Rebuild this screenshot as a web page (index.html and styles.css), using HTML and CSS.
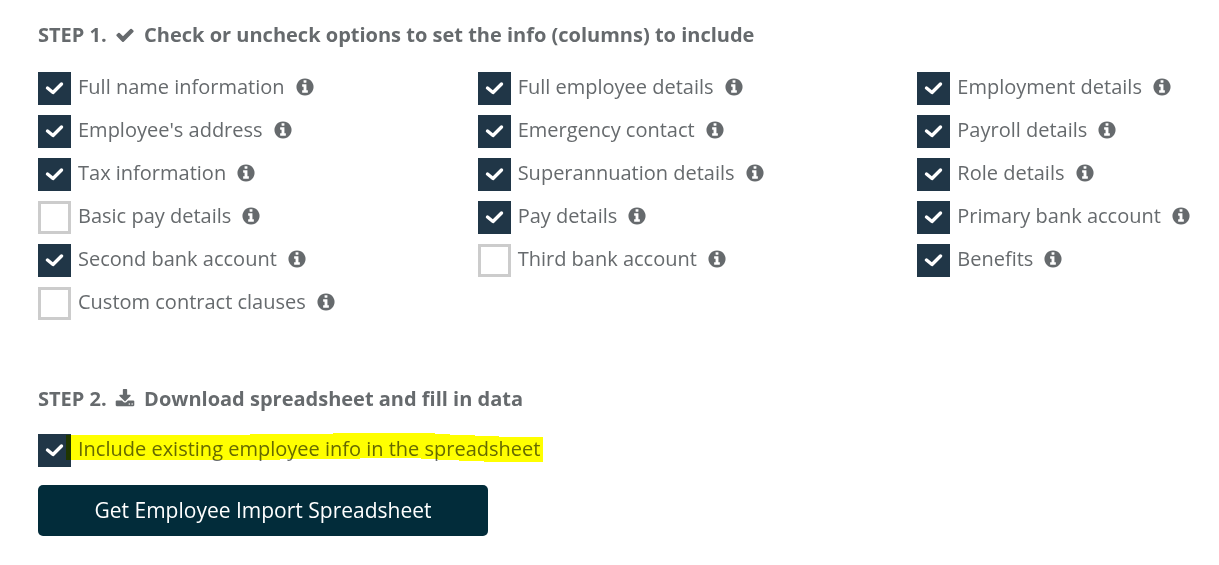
FILE: index.html
```html
<!DOCTYPE html>
<html lang="en">
<head>
  <meta charset="UTF-8" />
  <meta name="viewport" content="width=device-width, initial-scale=1.0" />
  <title>Employee import</title>
  <link rel="stylesheet" href="styles.css">
</head>
<body>
  <svg class="sprite" viewBox="0 0 1792 1792" aria-hidden="true">
    <symbol id="check" viewBox="0 0 1792 1792"><path d="M1671 566q0 40-28 68l-724 724-136 136q-28 28-68 28t-68-28l-136-136-362-362q-28-28-28-68t28-68l136-136q28-28 68-28t68 28l294 295 656-657q28-28 68-28t68 28l136 136q28 28 28 68z"/></symbol>
    <symbol id="info" viewBox="0 0 1792 1792"><path d="M1152 1376v-160q0-14-9-23t-23-9h-96v-512q0-14-9-23t-23-9h-320q-14 0-23 9t-9 23v160q0 14 9 23t23 9h96v320h-96q-14 0-23 9t-9 23v160q0 14 9 23t23 9h448q14 0 23-9t9-23zm-128-896v-160q0-14-9-23t-23-9h-192q-14 0-23 9t-9 23v160q0 14 9 23t23 9h192q14 0 23-9t9-23zm640 416q0 209-103 385.5t-279.5 279.5-385.5 103-385.5-103-279.5-279.5-103-385.5 103-385.5 279.5-279.5 385.5-103 385.5 103 279.5 279.5 103 385.5z"/></symbol>
    <symbol id="download" viewBox="0 0 1792 1792"><path d="M1344 1344q0-26-19-45t-45-19-45 19-19 45 19 45 45 19 45-19 19-45zm256 0q0-26-19-45t-45-19-45 19-19 45 19 45 45 19 45-19 19-45zm128-224v320q0 40-28 68t-68 28h-1472q-40 0-68-28t-28-68v-320q0-40 28-68t68-28h465l135 136q58 56 136 56t136-56l136-136h464q40 0 68 28t28 68zm-325-569q17 41-14 70l-448 448q-18 19-45 19t-45-19l-448-448q-31-29-14-70 17-39 59-39h256v-448q0-26 19-45t45-19h256q26 0 45 19t19 45v448h256q42 0 59 39z"/></symbol>
    <symbol id="tick" viewBox="0 0 33 33"><path d="M9.500 16L15 20.500L23.500 12" fill="none" stroke="#fff" stroke-width="3.400" stroke-linecap="round" stroke-linejoin="round"/></symbol>
  </svg>

  <main>
    <section>
      <h2>STEP 1. <svg class="icon"><use href="#check"/></svg> Check or uncheck options to set the info (columns) to include</h2>
      <div class="options">
        <label class="option"><span class="box"><input type="checkbox" checked><svg><use href="#tick"/></svg></span><span class="text">Full name information</span><svg class="icon"><use href="#info"/></svg></label>
        <label class="option"><span class="box"><input type="checkbox" checked><svg><use href="#tick"/></svg></span><span class="text">Full employee details</span><svg class="icon"><use href="#info"/></svg></label>
        <label class="option"><span class="box"><input type="checkbox" checked><svg><use href="#tick"/></svg></span><span class="text">Employment details</span><svg class="icon"><use href="#info"/></svg></label>
        <label class="option"><span class="box"><input type="checkbox" checked><svg><use href="#tick"/></svg></span><span class="text">Employee's address</span><svg class="icon"><use href="#info"/></svg></label>
        <label class="option"><span class="box"><input type="checkbox" checked><svg><use href="#tick"/></svg></span><span class="text">Emergency contact</span><svg class="icon"><use href="#info"/></svg></label>
        <label class="option"><span class="box"><input type="checkbox" checked><svg><use href="#tick"/></svg></span><span class="text">Payroll details</span><svg class="icon"><use href="#info"/></svg></label>
        <label class="option"><span class="box"><input type="checkbox" checked><svg><use href="#tick"/></svg></span><span class="text">Tax information</span><svg class="icon"><use href="#info"/></svg></label>
        <label class="option"><span class="box"><input type="checkbox" checked><svg><use href="#tick"/></svg></span><span class="text">Superannuation details</span><svg class="icon"><use href="#info"/></svg></label>
        <label class="option"><span class="box"><input type="checkbox" checked><svg><use href="#tick"/></svg></span><span class="text">Role details</span><svg class="icon"><use href="#info"/></svg></label>
        <label class="option"><span class="box"><input type="checkbox"><svg><use href="#tick"/></svg></span><span class="text">Basic pay details</span><svg class="icon"><use href="#info"/></svg></label>
        <label class="option"><span class="box"><input type="checkbox" checked><svg><use href="#tick"/></svg></span><span class="text">Pay details</span><svg class="icon"><use href="#info"/></svg></label>
        <label class="option"><span class="box"><input type="checkbox" checked><svg><use href="#tick"/></svg></span><span class="text">Primary bank account</span><svg class="icon"><use href="#info"/></svg></label>
        <label class="option"><span class="box"><input type="checkbox" checked><svg><use href="#tick"/></svg></span><span class="text">Second bank account</span><svg class="icon"><use href="#info"/></svg></label>
        <label class="option"><span class="box"><input type="checkbox"><svg><use href="#tick"/></svg></span><span class="text">Third bank account</span><svg class="icon"><use href="#info"/></svg></label>
        <label class="option"><span class="box"><input type="checkbox" checked><svg><use href="#tick"/></svg></span><span class="text">Benefits</span><svg class="icon"><use href="#info"/></svg></label>
        <label class="option"><span class="box"><input type="checkbox"><svg><use href="#tick"/></svg></span><span class="text">Custom contract clauses</span><svg class="icon"><use href="#info"/></svg></label>
      </div>
    </section>

    <section>
      <h2>STEP 2. <svg class="icon"><use href="#download"/></svg> Download spreadsheet and fill in data</h2>
      <label class="option existing">
        <span class="box"><input type="checkbox" checked><svg><use href="#tick"/></svg></span>
        <span class="text">Include existing employee info in the spreadsheet</span>
        <!-- highlighter stroke -->
        <svg class="marker" viewBox="0 0 477 29"><path fill="#ff0" shape-rendering="crispEdges" d="M0 2H184V1H267V0H369V1H384V2H409V3H433V4H477V29H418V28H393V27H372V26H355V25H294V26H214V27H0Z"/></svg>
      </label>
      <button class="download" type="button">Get Employee Import Spreadsheet</button>
    </section>
  </main>
</body>
</html>
```

FILE: styles.css
```css
* { box-sizing: border-box; }
body {
  margin: 0;
  background: #fff;
  color: #666a6d;
  font: 20px/30px "Open Sans", "Noto Sans", sans-serif;
}
main {
  display: flex;
  flex-direction: column;
  gap: 64px;
  padding: 20px 24px 30px 38px;
}
.sprite { display: none; }
.icon { width: 20px; height: 20px; fill: currentColor; flex: none; }

h2 { margin: 0 0 20px; font-size: 20px; line-height: 30px; font-weight: 700; }
h2 .icon { margin: 0 4px 0 3px; vertical-align: -3px; }

.options {
  display: grid;
  grid-template-columns: 38% 38% 24%;
  row-gap: 10px;
  padding-top: 2px;
}
.option { display: flex; align-items: flex-start; position: relative; }
.option .text { margin-left: 7px; white-space: nowrap; }
.option .icon { margin: 5px 0 0 10px; }

.box { display: grid; width: 33px; height: 33px; flex: none; }
.box input, .box svg { grid-area: 1 / 1; width: 33px; height: 33px; margin: 0; }
.box input {
  appearance: none;
  background: #fff;
  border: 3px solid #ccc;
  cursor: pointer;
}
.box input:checked { background: #203647; border-color: #203647; }
.box svg { visibility: hidden; pointer-events: none; }
.box input:checked + svg { visibility: visible; }

.marker {
  position: absolute;
  left: 28px;
  top: -1px;
  width: 477px;
  height: 29px;
  mix-blend-mode: multiply;
  pointer-events: none;
}

.existing { margin-bottom: 18px; }
.download {
  display: block;
  width: 450px;
  max-width: 100%;
  padding: 10px;
  border: none;
  border-radius: 5px;
  background: #022c3a;
  color: #fff;
  font: inherit;
  font-size: 21px;
  line-height: 31px;
  cursor: pointer;
}
.download:hover { background: #0a3d4f; }
```
